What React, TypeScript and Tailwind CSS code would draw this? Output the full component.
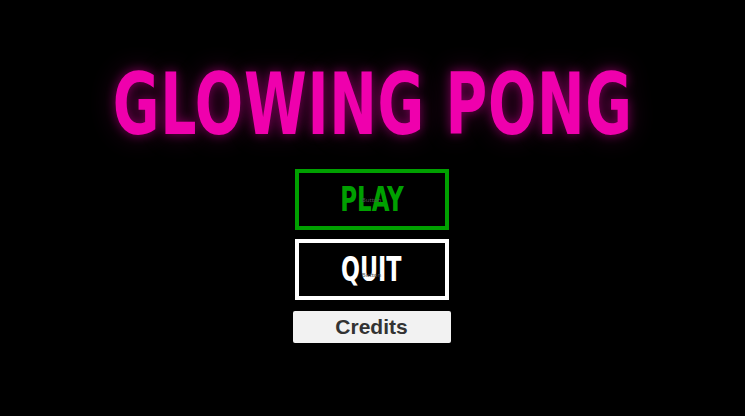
export default function App() {
  return (
    <div className="w-[745px] h-[416px] bg-black flex flex-col items-center overflow-hidden">
      <h1
        className="mt-[58px] h-[92px] flex items-center text-[86px] leading-none font-bold text-[#ef00ad] tracking-[1px] scale-x-[0.735] [text-shadow:0_0_12px_rgba(240,0,173,0.45),0_0_30px_rgba(240,0,173,0.25)]"
        style={{ fontFamily: '"DejaVu Sans Condensed", "Liberation Sans Narrow", sans-serif' }}
      >
        GLOWING PONG
      </h1>

      <div className="mt-[19px] mr-[2px] flex flex-col items-center">
        <button className="relative w-[154px] h-[61px] border-4 border-[#00a000] flex items-center justify-center">
          <span
            className="text-[33px] font-bold text-[#00a000] scale-x-[0.775] leading-none"
            style={{ fontFamily: '"DejaVu Sans Condensed", sans-serif' }}
          >
            PLAY
          </span>
          <span className="absolute left-1/2 top-1/2 -translate-x-1/2 -translate-y-1/2 text-[6px] text-[#555]">Button</span>
        </button>

        <button className="relative mt-[9px] w-[154px] h-[61px] border-4 border-white flex items-center justify-center">
          <span
            className="text-[33px] font-bold text-white scale-x-[0.75] leading-none"
            style={{ fontFamily: '"DejaVu Sans Condensed", sans-serif' }}
          >
            QUIT
          </span>
          <span className="absolute left-1/2 top-1/2 -translate-x-1/2 translate-y-[1px] text-[6px] text-[#555]">Button</span>
        </button>

        <button
          className="mt-[11px] w-[158px] h-[32px] bg-[#f2f2f2] rounded-[2px] flex items-center justify-center text-[21px] font-bold text-[#333]"
          style={{ fontFamily: '"Liberation Sans", Arial, sans-serif' }}
        >
          Credits
        </button>
      </div>
    </div>
  );
}
